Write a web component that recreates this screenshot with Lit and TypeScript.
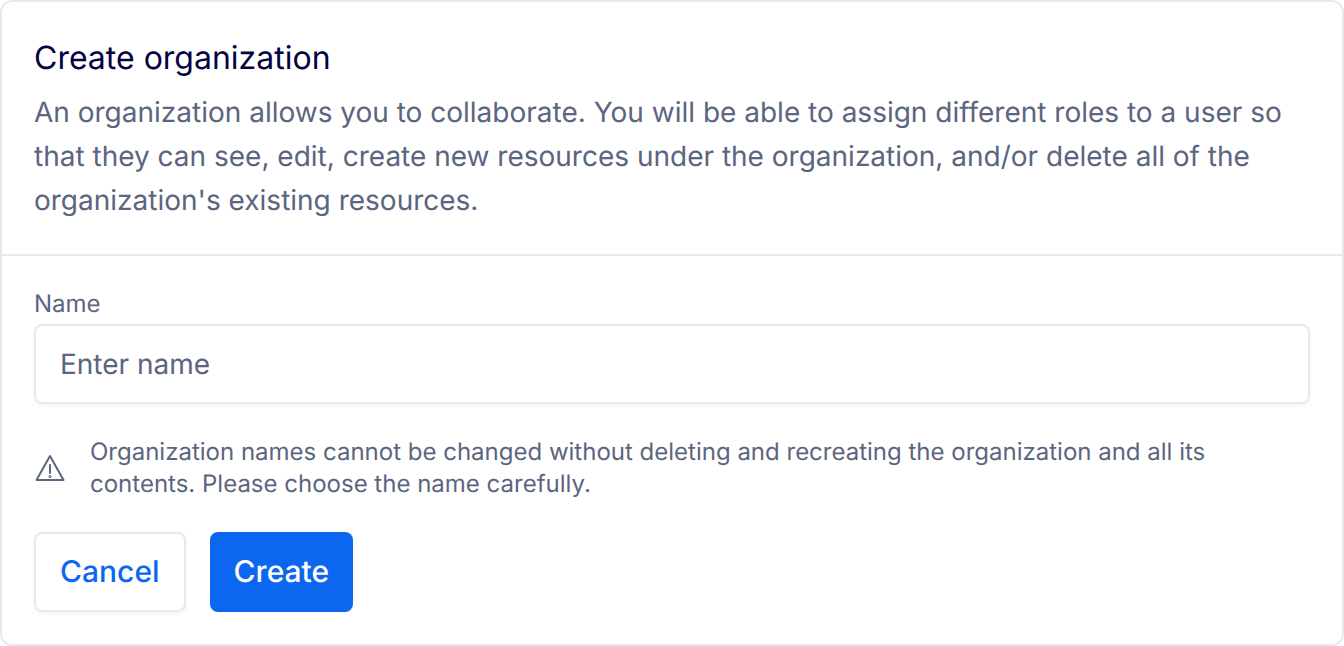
import { LitElement, html, css } from "lit";
import { customElement } from "lit/decorators.js";

@customElement("app-root")
export class AppRoot extends LitElement {
  static styles = css`
    :host {
      display: block;
      font-family: Inter, "Liberation Sans", sans-serif;
      font-variation-settings: "opsz" 14;
      text-rendering: geometricPrecision;
      -webkit-font-smoothing: antialiased;
    }
    .card {
      box-sizing: border-box;
      height: 646px;
      background: #fff;
      border: 2px solid #e5e9f1;
      border-radius: 12px;
      display: flex;
      flex-direction: column;
    }
    .head {
      box-sizing: border-box;
      height: 254px;
      padding: 32px 32px 0;
      border-bottom: 2px solid #e5e9f1;
    }
    h1 {
      margin: 0 0 8px;
      font-size: 32px;
      line-height: 48px;
      font-weight: 400;
      color: #030342;
    }
    .desc {
      margin: 0;
      font-size: 28px;
      line-height: 44px;
      color: #5b6580;
    }
    .body {
      padding: 32px 32px 0;
      display: flex;
      flex-direction: column;
    }
    label {
      font-size: 24px;
      line-height: 32px;
      font-weight: 400;
      color: #5b6580;
      margin-bottom: 4px;
    }
    .input {
      box-sizing: border-box;
      height: 80px;
      border: 2px solid #e5e9f1;
      border-radius: 8px;
      box-shadow: 0 2px 4px rgba(30, 40, 80, 0.05);
      padding: 0 24px;
      display: flex;
      align-items: center;
      font-size: 28px;
      color: #5b6580;
    }
    .note {
      display: flex;
      align-items: center;
      gap: 24px;
      margin-top: 32px;
      font-size: 24px;
      line-height: 32px;
      color: #5b6580;
    }
    .note svg {
      flex: none;
      width: 32px;
      height: 32px;
    }
    .note span { flex: 1; }
    .actions {
      display: flex;
      gap: 24px;
      margin-top: 32px;
    }
    .btn {
      box-sizing: border-box;
      height: 80px;
      display: flex;
      align-items: center;
      padding: 0 24px;
      border-radius: 8px;
      font-size: 30px;
      font-weight: 500;
    }
    .secondary {
      border: 2px solid #e5e9f1;
      color: #0d66f0;
      box-shadow: 0 2px 4px rgba(30, 40, 80, 0.05);
    }
    .primary {
      background: #0d66f0;
      color: #fff;
    }
  `;

  render() {
    return html`
      <div class="card">
        <div class="head">
          <h1>Create organization</h1>
          <p class="desc">An organization allows you to collaborate. You will be able to assign different roles to a user so that they can see, edit, create new resources under the organization, and/or delete all of the organization's existing resources.</p>
        </div>
        <div class="body">
          <label>Name</label>
          <div class="input">Enter name</div>
          <div class="note">
            <svg viewBox="0 0 32 32" fill="none" stroke="#5b6580" stroke-width="2" stroke-linejoin="round" stroke-linecap="round">
              <path d="M16 4 2.5 28h27z"/>
              <path d="M16 13v8"/>
              <circle cx="16" cy="24.6" r="0.5"/>
            </svg>
            <span>Organization names cannot be changed without deleting and recreating the organization and all its contents. Please choose the name carefully.</span>
          </div>
          <div class="actions">
            <div class="btn secondary">Cancel</div>
            <div class="btn primary">Create</div>
          </div>
        </div>
      </div>
    `;
  }
}
